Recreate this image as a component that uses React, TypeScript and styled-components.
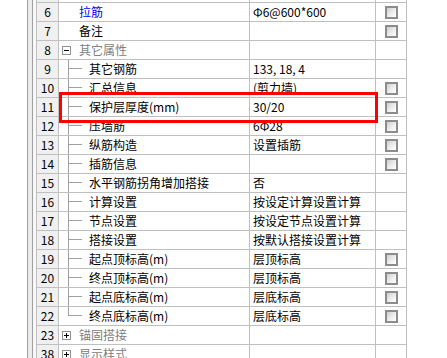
import React from 'react'
import styled, { createGlobalStyle } from 'styled-components'

const GlobalStyle = createGlobalStyle`
  html, body {
    margin: 0;
    padding: 0;
    background: #ffffff;
  }
  body {
    font-family: "Noto Sans CJK SC", "Noto Sans", sans-serif;
    font-size: 12px;
  }
`;

type RowKind = 'leaf' | 'group' | 'child';

interface PropRow {
  n: number;
  kind: RowKind;
  name: string;
  value?: string;
  check?: boolean;
  blue?: boolean;
  open?: boolean;
  last?: boolean;
  hidden?: boolean;
}

const rows: PropRow[] = [
  { n: 5, kind: 'leaf', name: '', hidden: true },
  { n: 6, kind: 'leaf', name: '拉筋', blue: true, value: 'Φ6@600*600', check: true },
  { n: 7, kind: 'leaf', name: '备注', check: true },
  { n: 8, kind: 'group', name: '其它属性', open: true },
  { n: 9, kind: 'child', name: '其它钢筋', value: '133, 18, 4' },
  { n: 10, kind: 'child', name: '汇总信息', value: '(剪力墙)', check: true },
  { n: 11, kind: 'child', name: '保护层厚度(mm)', value: '30/20', check: true },
  { n: 12, kind: 'child', name: '压墙筋', value: '6Φ28', check: true },
  { n: 13, kind: 'child', name: '纵筋构造', value: '设置插筋', check: true },
  { n: 14, kind: 'child', name: '插筋信息', check: true },
  { n: 15, kind: 'child', name: '水平钢筋拐角增加搭接', value: '否' },
  { n: 16, kind: 'child', name: '计算设置', value: '按设定计算设置计算' },
  { n: 17, kind: 'child', name: '节点设置', value: '按设定节点设置计算' },
  { n: 18, kind: 'child', name: '搭接设置', value: '按默认搭接设置计算' },
  { n: 19, kind: 'child', name: '起点顶标高(m)', value: '层顶标高', check: true },
  { n: 20, kind: 'child', name: '终点顶标高(m)', value: '层顶标高', check: true },
  { n: 21, kind: 'child', name: '起点底标高(m)', value: '层底标高', check: true },
  { n: 22, kind: 'child', name: '终点底标高(m)', value: '层底标高', check: true, last: true },
  { n: 23, kind: 'group', name: '锚固搭接' },
  { n: 38, kind: 'group', name: '显示样式' },
];

const Page = styled.div`
  position: relative;
  display: flex;
  width: 447px;
  height: 358px;
  overflow: hidden;
  background: #ffffff;
`;

const Gutter = styled.div`
  width: 27px;
  flex: none;
`;

const OuterFrame = styled.div`
  display: flex;
  border-left: 1px solid #a0a0a0;
  padding-left: 4px;
  background: #ececec;
`;

const InnerFrame = styled.div`
  display: flex;
  border-left: 1px solid #a0a0a0;
  padding-left: 3px;
  background: #f7f7f7;
`;

const Table = styled.div`
  border-left: 1px solid #c0c0c0;
  margin-top: -16px;
  background: #ffffff;
  flex: none;
  align-self: flex-start;
`;

const Filler = styled.div`
  flex: 1;
  background: #ffffff;
`;

const Row = styled.div`
  display: grid;
  grid-template-columns: 22px 191px 126px 31px;
  height: 19px;
`;

const Cell = styled.div`
  box-sizing: border-box;
  display: flex;
  align-items: center;
  border-right: 1px solid #c0c0c0;
  border-bottom: 1px solid #c0c0c0;
  white-space: nowrap;
  overflow: hidden;
  color: #000000;
  line-height: 18px;
`;

const NumCell = styled(Cell)`
  justify-content: center;
  background: #f0f0f0;
`;

const NameCell = styled(Cell)<{ $pad: number }>`
  padding-left: ${({ $pad }) => $pad}px;
`;

const ValueCell = styled(Cell)`
  padding-left: 3px;
`;

const CheckCell = styled(Cell)`
  justify-content: center;
`;

const Label = styled.span<{ $tone: 'normal' | 'blue' | 'muted' }>`
  color: ${({ $tone }) => ($tone === 'blue' ? '#0000ff' : $tone === 'muted' ? '#808080' : '#000000')};
`;

const Checkbox = styled.span`
  box-sizing: border-box;
  width: 13px;
  height: 13px;
  margin-left: 1px;
  border: 2px solid #8c8c8c;
  background: linear-gradient(135deg, #cfcfcf 0%, #eeeeee 55%, #ffffff 100%);
`;

const Expander = styled.svg`
  flex: none;
  margin-left: 3px;
  margin-right: 8px;
`;

const Connector = styled.svg`
  flex: none;
`;

const Highlight = styled.div`
  position: absolute;
  left: 59px;
  top: 92px;
  width: 319px;
  height: 31px;
  box-sizing: border-box;
  border: 3px solid #ff0000;
  pointer-events: none;
`;

function ExpandBox({ open }: { open?: boolean }) {
  return (
    <Expander width="9" height="9" viewBox="0 0 9 9">
      <rect x="0.5" y="0.5" width="8" height="8" fill="#ffffff" stroke="#919191" />
      <line x1="2" y1="4.5" x2="7" y2="4.5" stroke="#000000" />
      {!open && <line x1="4.5" y1="2" x2="4.5" y2="7" stroke="#000000" />}
    </Expander>
  );
}

function Branch({ last }: { last?: boolean }) {
  return (
    <Connector width="30" height="18" viewBox="0 0 30 18">
      <line x1="9.5" y1="0" x2="9.5" y2={last ? 9 : 18} stroke="#a0a0a0" />
      <line x1="9.5" y1="8.5" x2="23" y2="8.5" stroke="#a0a0a0" />
    </Connector>
  );
}

function NameContent({ row }: { row: PropRow }) {
  if (row.kind === 'group') {
    return (
      <NameCell $pad={0}>
        <ExpandBox open={row.open} />
        <Label $tone="muted">{row.name}</Label>
      </NameCell>
    );
  }
  if (row.kind === 'child') {
    return (
      <NameCell $pad={0}>
        <Branch last={row.last} />
        <Label $tone="normal">{row.name}</Label>
      </NameCell>
    );
  }
  return (
    <NameCell $pad={20}>
      <Label $tone={row.blue ? 'blue' : 'normal'}>{row.name}</Label>
    </NameCell>
  );
}

export default function App() {
  return (
    <>
      <GlobalStyle />
      <Page>
        <Gutter />
        <OuterFrame>
          <InnerFrame>
            <Table>
              {rows.map((row) => (
                <Row key={row.n}>
                  <NumCell>{row.hidden ? null : row.n}</NumCell>
                  <NameContent row={row} />
                  <ValueCell>{row.value}</ValueCell>
                  <CheckCell>{row.check && <Checkbox />}</CheckCell>
                </Row>
              ))}
            </Table>
          </InnerFrame>
        </OuterFrame>
        <Filler />
        <Highlight />
      </Page>
    </>
  );
}
